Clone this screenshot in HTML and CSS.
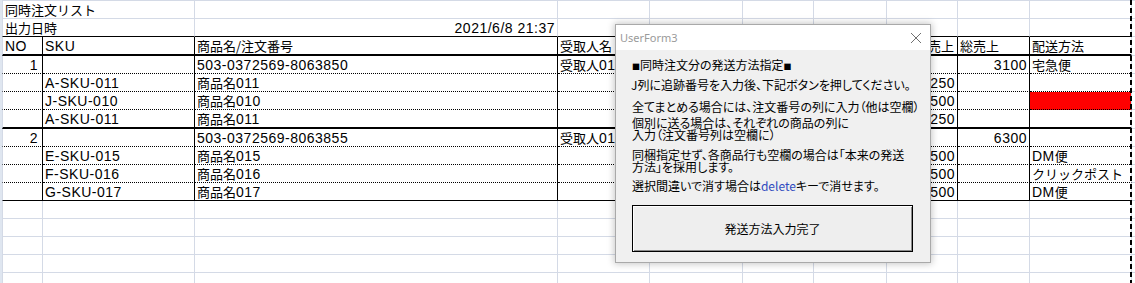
FILE: index.html
```html
<!DOCTYPE html>
<html lang="ja">
<head>
<meta charset="utf-8">
<title>同時注文リスト</title>
<link rel="stylesheet" href="styles.css">
</head>
<body>
<div class="sheet">
  <div class="rh"></div>
  <div class="grid">
    <div class="r r1">
      <div class="c s2"><span class="j">同時注文リスト</span></div>
      <div class="c"></div><div class="c"></div><div class="c"></div><div class="c"></div><div class="c"></div><div class="c"></div><div class="c"></div><div class="c"></div><div class="c"></div>
    </div>
    <div class="r r2">
      <div class="c s2"><span class="j">出力日時</span></div>
      <div class="c num">2021/6/8 21:37</div>
      <div class="c"></div><div class="c"></div><div class="c"></div><div class="c"></div><div class="c"></div><div class="c"></div><div class="c"></div><div class="c k"></div>
    </div>
    <div class="r tb hd">
      <div class="c">NO</div>
      <div class="c">SKU</div>
      <div class="c"><span class="j">商品名/注文番号</span></div>
      <div class="c"><span class="j">受取人名</span></div>
      <div class="c"><span class="j">住所</span></div>
      <div class="c"><span class="j">数量</span></div>
      <div class="c"><span class="j">単価</span></div>
      <div class="c"><span class="j">商品別売上</span></div>
      <div class="c"><span class="j">総売上</span></div>
      <div class="c jc"><span class="j">配送方法</span></div>
      <div class="c"></div>
    </div>
    <div class="r tb dt">
      <div class="c num no">1</div>
      <div class="c"></div>
      <div class="c">503-0372569-8063850</div>
      <div class="c"><span class="j">受取人</span>01</div>
      <div class="c"></div><div class="c"></div><div class="c"></div>
      <div class="c num"></div>
      <div class="c num">3100</div>
      <div class="c jc"><span class="j">宅急便</span></div>
      <div class="c"></div>
    </div>
    <div class="r tb dt">
      <div class="c"></div>
      <div class="c">A-SKU-011</div>
      <div class="c"><span class="j">商品名</span>011</div>
      <div class="c"></div><div class="c"></div><div class="c"></div><div class="c"></div>
      <div class="c num">250</div>
      <div class="c"></div>
      <div class="c jc"></div>
      <div class="c"></div>
    </div>
    <div class="r tb dt">
      <div class="c"></div>
      <div class="c">J-SKU-010</div>
      <div class="c"><span class="j">商品名</span>010</div>
      <div class="c"></div><div class="c"></div><div class="c"></div><div class="c"></div>
      <div class="c num">500</div>
      <div class="c"></div>
      <div class="c jc red"></div>
      <div class="c"></div>
    </div>
    <div class="r tb end">
      <div class="c"></div>
      <div class="c">A-SKU-011</div>
      <div class="c"><span class="j">商品名</span>011</div>
      <div class="c"></div><div class="c"></div><div class="c"></div><div class="c"></div>
      <div class="c num">250</div>
      <div class="c"></div>
      <div class="c jc"></div>
      <div class="c"></div>
    </div>
    <div class="r tb dt">
      <div class="c num no">2</div>
      <div class="c"></div>
      <div class="c">503-0372569-8063855</div>
      <div class="c"><span class="j">受取人</span>01</div>
      <div class="c"></div><div class="c"></div><div class="c"></div>
      <div class="c num"></div>
      <div class="c num">6300</div>
      <div class="c jc"></div>
      <div class="c"></div>
    </div>
    <div class="r tb dt">
      <div class="c"></div>
      <div class="c">E-SKU-015</div>
      <div class="c"><span class="j">商品名</span>015</div>
      <div class="c"></div><div class="c"></div><div class="c"></div><div class="c"></div>
      <div class="c num">500</div>
      <div class="c"></div>
      <div class="c jc">DM<span class="j">便</span></div>
      <div class="c"></div>
    </div>
    <div class="r tb dt">
      <div class="c"></div>
      <div class="c">F-SKU-016</div>
      <div class="c"><span class="j">商品名</span>016</div>
      <div class="c"></div><div class="c"></div><div class="c"></div><div class="c"></div>
      <div class="c num">500</div>
      <div class="c"></div>
      <div class="c jc"><span class="j">クリックポスト</span></div>
      <div class="c"></div>
    </div>
    <div class="r tb last">
      <div class="c"></div>
      <div class="c">G-SKU-017</div>
      <div class="c"><span class="j">商品名</span>017</div>
      <div class="c"></div><div class="c"></div><div class="c"></div><div class="c"></div>
      <div class="c num">500</div>
      <div class="c"></div>
      <div class="c jc">DM<span class="j">便</span></div>
      <div class="c"></div>
    </div>
    <div class="r"><div class="c"></div><div class="c"></div><div class="c"></div><div class="c"></div><div class="c"></div><div class="c"></div><div class="c"></div><div class="c"></div><div class="c"></div><div class="c"></div><div class="c"></div></div>
    <div class="r"><div class="c"></div><div class="c"></div><div class="c"></div><div class="c"></div><div class="c"></div><div class="c"></div><div class="c"></div><div class="c"></div><div class="c"></div><div class="c"></div><div class="c"></div></div>
    <div class="r"><div class="c"></div><div class="c"></div><div class="c"></div><div class="c"></div><div class="c"></div><div class="c"></div><div class="c"></div><div class="c"></div><div class="c"></div><div class="c"></div><div class="c"></div></div>
    <div class="r"><div class="c"></div><div class="c"></div><div class="c"></div><div class="c"></div><div class="c"></div><div class="c"></div><div class="c"></div><div class="c"></div><div class="c"></div><div class="c"></div><div class="c"></div></div>
    <div class="r"><div class="c"></div><div class="c"></div><div class="c"></div><div class="c"></div><div class="c"></div><div class="c"></div><div class="c"></div><div class="c"></div><div class="c"></div><div class="c"></div><div class="c"></div></div>
  </div>
</div>
<div class="pagebreak"></div>

<div class="dlg">
  <div class="tbar">
    <span class="ttl">UserForm3</span>
    <svg class="close" width="12" height="12" viewBox="0 0 12 12"><path d="M1 1L11 11M11 1L1 11" stroke="#707070" stroke-width="1" fill="none"/></svg>
  </div>
  <div class="dbody">
    <div class="lb l1"><span class="sq">■</span>同時注文分の発送方法指定<span class="sq">■</span></div>
    <div class="lb l2"><span class="cut">J</span>列に追跡番号を入力後、下記ボタンを押してください。</div>
    <div class="lb l3">全てまとめる場合には、注文番号の列に入力（他は空欄）</div>
    <div class="lb ml l4">個別に送る場合は、それぞれの商品の列に<br>入力（注文番号列は空欄に）</div>
    <div class="lb ml l5">同梱指定せず、各商品行も空欄の場合は「本来の発送<br>方法」を採用します。</div>
    <div class="lb l6">選択間違いで消す場合は<span class="del">delete</span>キーで消せます。</div>
    <button class="btn">発送方法入力完了</button>
  </div>
</div>
</body>
</html>
```

FILE: styles.css
```css
:root {
  --grid: #d4dae6;
}
html, body {
  margin: 0;
  padding: 0;
  background: #fff;
}
body {
  width: 1135px;
  height: 283px;
  overflow: hidden;
  position: relative;
}
.sheet {
  display: flex;
  width: 1135px;
  height: 283px;
  overflow: hidden;
}
.rh {
  flex: none;
  width: 2px;
  background: #dfe6f0;
}
.grid {
  flex: none;
  display: grid;
  grid-template-columns: 41px 152px 363px 92px 93px 71px 73px 71px 72px 102px 80px;
  grid-template-rows: 19px 18px 19px 18px 18px 18px 19px 18px 18px 18px 18px 18px 18px 18px 18px 18px;
}
.r {
  display: contents;
}
.c {
  box-sizing: border-box;
  border-right: 1px solid var(--grid);
  border-bottom: 1px solid var(--grid);
  padding: 0 2px 0 2px;
  display: flex;
  align-items: flex-end;
  overflow: hidden;
  white-space: nowrap;
  font-family: "Liberation Sans", "Noto Sans CJK JP", sans-serif;
  font-size: 14px;
  letter-spacing: 0.5px;
  line-height: 16px;
  color: #000;
}
.r > .c:first-child {
  border-left: 1px solid var(--grid);
}
.s2 {
  grid-column: span 2;
}
.r1 > .c {
  border-top: 1px solid var(--grid);
}
.r2 > .c:not(.k) {
  border-bottom-color: #000;
}
.j {
  font-family: "Noto Sans CJK JP", sans-serif;
  font-size: 13px;
  letter-spacing: 0;
}
.num {
  justify-content: flex-end;
}
.no {
  padding-right: 4px;
}
.tb > .c:not(:last-child) {
  border-right-color: #000;
}
.tb > .c.jc {
  border-right-color: var(--grid);
}
.hd > .c:not(:last-child) {
  border-bottom: 2px solid #000;
}
.dt > .c:not(:last-child) {
  border-bottom: 1px dotted #000;
}
.end > .c:not(:last-child) {
  border-bottom: 2px solid #000;
}
.last > .c:not(:last-child) {
  border-bottom: 1px solid #000;
}
.red {
  background: #ff0000;
}
.pagebreak {
  position: absolute;
  left: 1130px;
  top: 0;
  width: 2px;
  height: 283px;
  background: repeating-linear-gradient(to bottom, #000 0 5px, transparent 5px 8px);
}

/* dialog */
.dlg {
  position: absolute;
  left: 615px;
  top: 24px;
  width: 316px;
  height: 239px;
  box-sizing: border-box;
  border: 1px solid #a9a9a9;
  background: #f0f0f0;
  box-shadow: 0 0 7px 1px rgba(0, 0, 0, 0.22);
  display: flex;
  flex-direction: column;
}
.tbar {
  flex: none;
  height: 25px;
  background: #fff;
  display: flex;
  align-items: center;
  justify-content: space-between;
  padding: 0 8px 0 4px;
}
.ttl {
  font-family: "Noto Sans", sans-serif;
  font-size: 11px;
  color: #9a9a9a;
}
.close {
  display: block;
}
.dbody {
  flex: 1;
  padding: 9px 0 0 16px;
  display: flex;
  flex-direction: column;
  align-items: flex-start;
}
.lb {
  font-family: "Noto Sans CJK JP", sans-serif;
  font-size: 12px;
  line-height: 12px;
  font-feature-settings: "palt";
  color: #000;
  white-space: nowrap;
}
.l2 {
  margin-top: 6px;
}
.l3 {
  margin-top: 10px;
}
.l4 {
  margin-top: 4px;
}
.l5 {
  margin-top: 8px;
}
.l6 {
  margin-top: 7px;
}
.sq {
  font-size: 8px;
}
.cut {
  margin-left: -1px;
}
.del {
  color: #2f4bbf;
}
.btn {
  margin-top: 13px;
  width: 281px;
  height: 47px;
  box-sizing: border-box;
  border: 1px solid #000;
  background: #eeeeee;
  box-shadow: inset 1px 1px 0 #ffffff, inset -1px -1px 0 #8a8a8a;
  font-family: "Noto Sans CJK JP", sans-serif;
  font-size: 12px;
  color: #000;
  padding: 0;
}
```
